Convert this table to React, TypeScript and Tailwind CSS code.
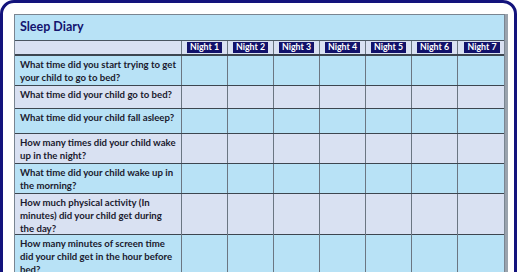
import React from 'react';

const nights = ['Night 1', 'Night 2', 'Night 3', 'Night 4', 'Night 5', 'Night 6', 'Night 7'];

const questions: { text: string[]; h: string; bg: string }[] = [
  { text: ['What time did you start trying to get', 'your child to go to bed?'], h: 'h-[30px]', bg: 'bg-[#b8e2f6]' },
  { text: ['What time did your child go to bed?'], h: 'h-[23px]', bg: 'bg-[#d9e1f2]' },
  { text: ['What time did your child fall asleep?'], h: 'h-[25px]', bg: 'bg-[#b8e2f6]' },
  { text: ['How many times did your child wake', 'up in the night?'], h: 'h-[30px]', bg: 'bg-[#d9e1f2]' },
  { text: ['What time did your child wake up in', 'the morning?'], h: 'h-[30px]', bg: 'bg-[#b8e2f6]' },
  { text: ['How much physical activity (In', 'minutes) did your child get during', 'the day?'], h: 'h-[41px]', bg: 'bg-[#d9e1f2]' },
  { text: ['How many minutes of screen time', 'did your child get in the hour before', 'bed?'], h: 'h-[42px]', bg: 'bg-[#b8e2f6]' },
];

const cols = 'grid grid-cols-[166px_repeat(6,46px)_49px]';

export default function App() {
  return (
    <div className="w-[520px] h-[272px] overflow-hidden bg-white" style={{ fontFamily: 'Lato, "Open Sans", sans-serif' }}>
      <div className="w-[517px] h-[300px] border-[3px] border-[#13137c] rounded-[14px] bg-white pl-[11px] pt-[11px]">
        <div className="w-[494px] border-r-[3px] border-[#9aa3ad]">
          <div className="w-[491px] border border-[#7a8591]">
            <div className="h-[26px] bg-[#b8e2f6] border-b border-[#4a5560] flex items-center pl-[5px]">
              <span className="text-[12.5px] font-bold text-[#13136e] leading-none">Sleep Diary</span>
            </div>
            <div className={`${cols} h-[15px] bg-[#d9e1f2] border-b-2 border-[#3d4650]`}>
              <div />
              {nights.map((n) => (
                <div key={n} className="border-l border-[#6b7682] flex items-center justify-center">
                  <span className="bg-[#12126a] text-white text-[8.8px] font-bold leading-none px-[3px] py-[1px]">{n}</span>
                </div>
              ))}
            </div>
            {questions.map((q, i) => (
              <div key={i} className={`${cols} ${q.h} ${q.bg} border-b border-[#3d4650]`}>
                <div className="pl-[5px] pt-[2px] text-[9.6px] font-bold leading-[13px] text-[#1a1a2e]">
                  {q.text.map((t, j) => (
                    <div key={j} className="whitespace-nowrap">{t}</div>
                  ))}
                </div>
                {nights.map((n) => (
                  <div key={n} className="border-l border-[#6b7682]" />
                ))}
              </div>
            ))}
          </div>
        </div>
      </div>
    </div>
  );
}
